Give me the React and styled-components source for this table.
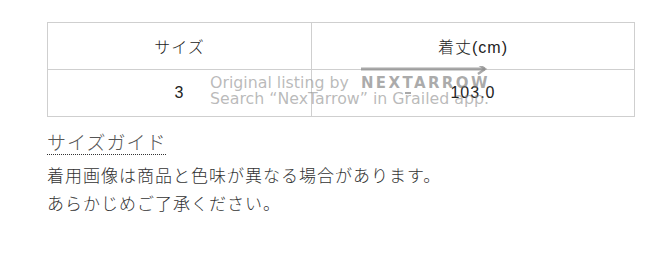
import React from 'react';
import styled, { createGlobalStyle } from 'styled-components';

const GlobalStyle = createGlobalStyle`
  html, body {
    margin: 0;
    padding: 0;
    background: #fff;
  }
  body {
    font-family: "Liberation Sans", "Noto Sans CJK JP", sans-serif;
    color: #333;
  }
`;

const Page = styled.div`
  width: 656px;
  height: 279px;
  padding: 22px 0 0 47px;
  box-sizing: border-box;
  overflow: hidden;
`;

const TableWrap = styled.div`
  position: relative;
  width: 585px;
`;

const SizeTable = styled.table`
  width: 585px;
  border-collapse: collapse;
  table-layout: fixed;
`;

const Cell = styled.td`
  width: ${(p) => p.$width}px;
  height: 46px;
  padding: 0;
  border: 1px solid #cfcfcf;
  text-align: center;
  vertical-align: middle;
  font-size: 16px;
  font-weight: 300;
  letter-spacing: 1px;
  color: #222;
`;

const Watermark = styled.div`
  position: absolute;
  left: 163px;
  top: 53px;
  pointer-events: none;
  color: rgba(140, 140, 140, 0.6);
  font-family: "DejaVu Sans", sans-serif;
  font-size: 15.8px;
  line-height: 16px;
`;

const WatermarkLine = styled.div`
  display: flex;
  align-items: flex-end;
  white-space: nowrap;
`;

const Brand = styled.span`
  position: relative;
  margin-left: 12px;
  font-size: 15px;
  font-weight: bold;
  letter-spacing: 2.4px;
  color: rgba(115, 115, 115, 0.6);
`;

const BrandArrow = styled.svg`
  position: absolute;
  left: 0;
  top: -9px;
`;

const Guide = styled.h2`
  display: inline-block;
  margin: 12px 0 0;
  font-family: "Noto Sans CJK JP", sans-serif;
  font-weight: 300;
  font-size: 19px;
  letter-spacing: 1px;
  line-height: 25px;
  color: #555;
  border-bottom: 1px dotted #333;
`;

const Note = styled.p`
  margin: 6px 0 0;
  font-family: "Noto Sans CJK JP", sans-serif;
  font-weight: 300;
  font-size: 17px;
  letter-spacing: 1px;
  line-height: 28px;
  color: #333;
`;

const Watermarked = () => (
  <Watermark>
    <WatermarkLine>
      Original listing by
      <Brand>
        <BrandArrow width="128" height="32" viewBox="0 0 128 32">
          <path d="M0 3 H124" stroke="rgba(140,140,140,0.75)" strokeWidth="3" />
          <path d="M117 -2 L124 3 L117 8" fill="none" stroke="rgba(140,140,140,0.75)" strokeWidth="2.5" />
          <path d="M44 27 H50" stroke="rgba(140,140,140,0.75)" strokeWidth="2" />
        </BrandArrow>
        NEXTARROW
      </Brand>
    </WatermarkLine>
    <WatermarkLine>Search “NexTarrow” in Grailed app.</WatermarkLine>
  </Watermark>
);

const App = () => (
  <>
    <GlobalStyle />
    <Page>
      <TableWrap>
        <SizeTable>
          <tbody>
            <tr>
              <Cell $width={263}>サイズ</Cell>
              <Cell $width={322}>着丈(cm)</Cell>
            </tr>
            <tr>
              <Cell $width={263}>3</Cell>
              <Cell $width={322}>103.0</Cell>
            </tr>
          </tbody>
        </SizeTable>
        <Watermarked />
      </TableWrap>
      <Guide>サイズガイド</Guide>
      <Note>
        着用画像は商品と色味が異なる場合があります。
        <br />
        あらかじめご了承ください。
      </Note>
    </Page>
  </>
);

export default App;
